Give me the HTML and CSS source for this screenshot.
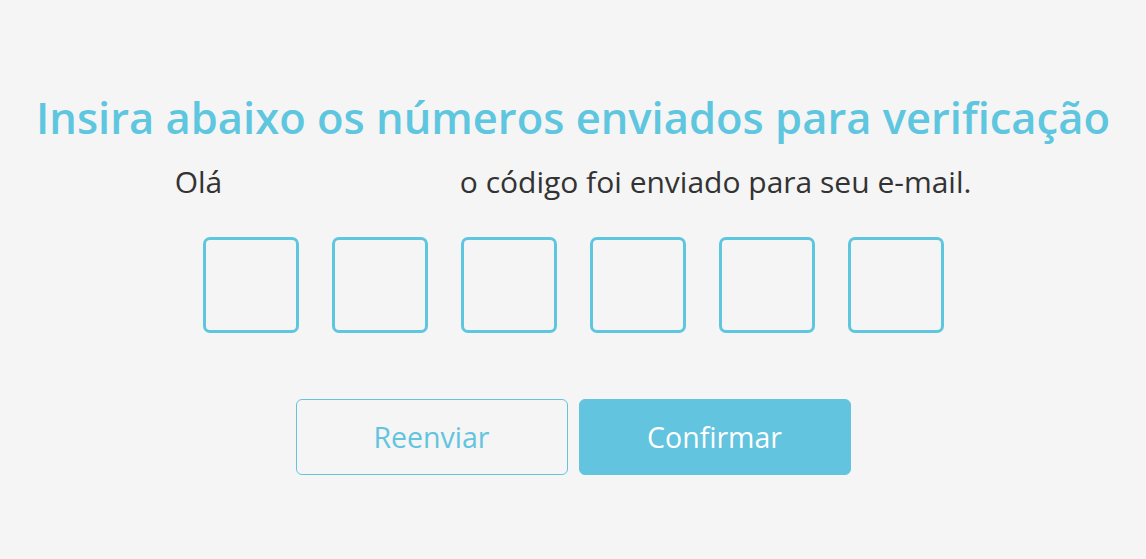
FILE: index.html
```html
<!DOCTYPE html>
<html lang="pt-BR">
<head>
<meta charset="utf-8">
<title>Verificação</title>
<link rel="stylesheet" href="styles.css">
</head>
<body>
<main class="page">
  <h1 class="title">Insira abaixo os números enviados para verificação</h1>
  <p class="subtitle">Olá <span class="name"></span> o código foi enviado para seu e-mail.</p>
  <div class="codes">
    <input class="code" type="text" maxlength="1" aria-label="Dígito 1">
    <input class="code" type="text" maxlength="1" aria-label="Dígito 2">
    <input class="code" type="text" maxlength="1" aria-label="Dígito 3">
    <input class="code" type="text" maxlength="1" aria-label="Dígito 4">
    <input class="code" type="text" maxlength="1" aria-label="Dígito 5">
    <input class="code" type="text" maxlength="1" aria-label="Dígito 6">
  </div>
  <div class="actions">
    <button class="btn btn-outline" type="button">Reenviar</button>
    <button class="btn btn-solid" type="button">Confirmar</button>
  </div>
</main>
</body>
</html>
```
FILE: styles.css
```css
html, body {
  margin: 0;
  padding: 0;
  background: #f5f5f5;
}
body {
  font-family: "Open Sans", "Noto Sans", sans-serif;
  width: 1146px;
  height: 559px;
  overflow: hidden;
}
.page {
  display: flex;
  flex-direction: column;
  align-items: center;
  padding-top: 90px;
}
.title {
  margin: 0;
  font-size: 43.5px;
  font-weight: 600;
  line-height: 56px;
  color: #5ec6df;
  white-space: nowrap;
}
.subtitle {
  margin: 16px 0 0;
  font-size: 30px;
  line-height: 40px;
  color: #333;
  white-space: nowrap;
}
.name {
  display: inline-block;
  width: 222px;
}
.codes {
  display: flex;
  gap: 33px;
  margin-top: 35px;
}
.code {
  box-sizing: border-box;
  width: 96px;
  height: 96px;
  border: 3px solid #5ec6df;
  border-radius: 7px;
  background: transparent;
  margin: 0;
  padding: 0;
  outline: none;
}
.actions {
  display: flex;
  gap: 11px;
  margin-top: 66px;
}
.btn {
  box-sizing: border-box;
  width: 272px;
  height: 76px;
  border-radius: 6px;
  font-family: inherit;
  font-size: 28.5px;
  font-weight: 400;
  margin: 0;
  padding: 0;
  cursor: pointer;
}
.btn-outline {
  background: #f5f5f5;
  border: 1px solid #62c4de;
  color: #62c4de;
}
.btn-solid {
  background: #62c4de;
  border: 1px solid #62c4de;
  color: #fff;
}
```
